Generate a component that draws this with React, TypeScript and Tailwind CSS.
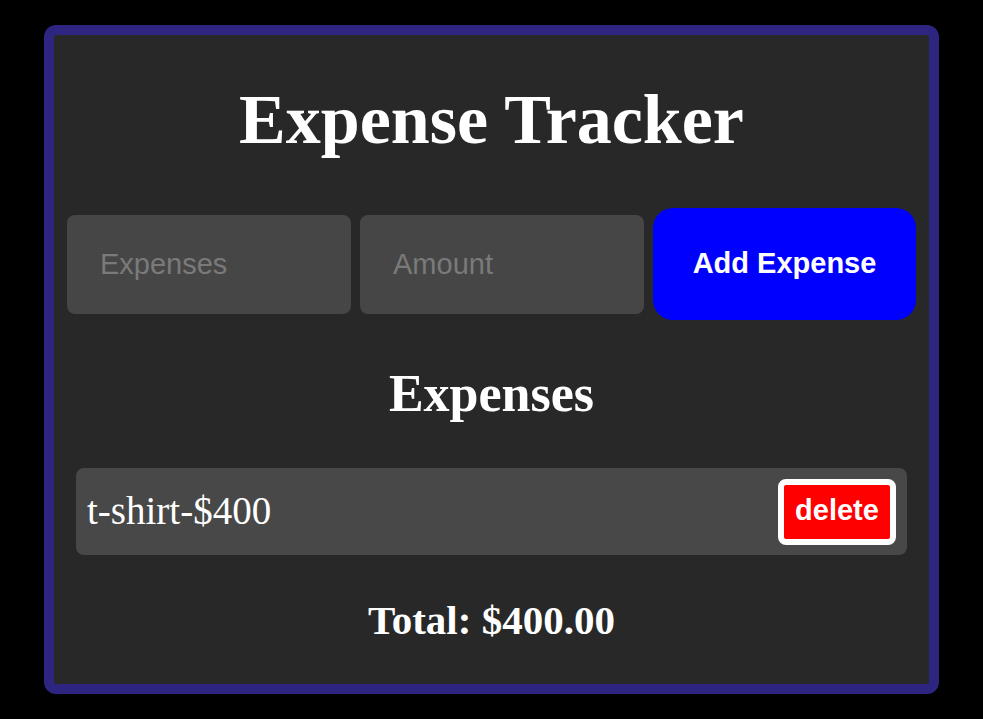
import React from "react";

export default function App() {
  return (
    <div className="min-h-screen w-full bg-black flex items-center justify-center">
      <div
        className="w-[895px] h-[669px] rounded-[12px] border-[10px] border-[#2d2580] bg-[#282828] flex flex-col items-center"
        style={{ fontFamily: '"Liberation Serif", "Times New Roman", serif' }}
      >
        <h1 className="mt-[50px] text-[70px] leading-[70px] font-bold text-white">Expense Tracker</h1>

        <div className="mt-[53px] w-full px-[13px] flex items-center gap-[9px]" style={{ fontFamily: '"Liberation Sans", Arial, sans-serif' }}>
          <input
            placeholder="Expenses"
            className="w-[284px] h-[99px] rounded-[8px] bg-[#464646] pl-[33px] text-[29px] text-white placeholder:text-[#7a7a7a] outline-none"
          />
          <input
            placeholder="Amount"
            className="w-[284px] h-[99px] rounded-[8px] bg-[#464646] pl-[33px] text-[29px] text-white placeholder:text-[#7a7a7a] outline-none"
          />
          <button className="w-[263px] h-[112px] rounded-[20px] bg-[#0000ff] text-white text-[29px] font-bold">
            Add Expense
          </button>
        </div>

        <h2 className="mt-[48px] text-[52px] leading-[52px] font-bold text-white">Expenses</h2>

        <div className="mt-[48px] w-full px-[22px]">
          <div className="h-[87px] rounded-[8px] bg-[#484848] flex items-center justify-between pl-[11px] pr-[11px]">
            <span className="text-[39px] text-white">t-shirt-$400</span>
            <button
              className="w-[118px] h-[66px] rounded-[8px] border-[6px] border-white bg-[#ff0000] text-white text-[29px] font-bold flex items-center justify-center pb-[2px]"
              style={{ fontFamily: '"Liberation Sans", Arial, sans-serif' }}
            >
              delete
            </button>
          </div>
        </div>

        <div className="mt-[45px] text-[41px] leading-[41px] font-bold text-white">Total: $400.00</div>
      </div>
    </div>
  );
}
